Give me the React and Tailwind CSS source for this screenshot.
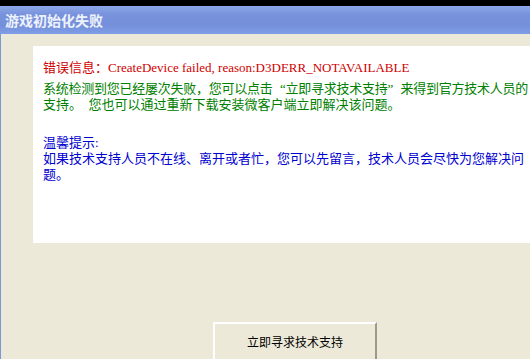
export default function App() {
  const song = { fontFamily: '"Liberation Serif", "Noto Sans CJK SC", serif' };
  return (
    <div className="w-[530px] h-[359px] overflow-hidden bg-black flex flex-col">
      <div className="h-[6px] shrink-0 bg-black" />
      <div
        className="h-[28px] shrink-0 flex items-center pl-[5px] bg-[linear-gradient(to_bottom,#8ea8ea_0%,#7893dc_30%,#7590da_70%,#7f9ee8_100%)]"
      >
        <span
          className="text-[14px] font-bold text-[#eef2fc] leading-none"
          style={{ fontFamily: '"Noto Sans CJK SC", sans-serif' }}
        >
          游戏初始化失败
        </span>
      </div>
      <div className="flex-1 bg-[#ece9d8] border-l border-[#7d97d6] flex flex-col overflow-hidden">
        <div
          className="ml-[32px] mt-[12px] h-[197px] shrink-0 bg-white pl-[10px] pt-[14px] text-[13px] leading-[16px] whitespace-pre overflow-hidden"
          style={song}
        >
          <div className="text-[#d00000]">错误信息：CreateDevice failed, reason:D3DERR_NOTAVAILABLE</div>
          <div className="mt-[5px] text-[#008000]">
            <div className="tracking-[-0.25px]">
              系统检测到您已经屡次失败，您可以点击
              <span className="inline-block w-[13px] text-right">“</span>
              立即寻求技术支持
              <span className="inline-block w-[13px] text-left">”</span>
              来得到官方技术人员的
            </div>
            <div>支持。  您也可以通过重新下载安装微客户端立即解决该问题。</div>
          </div>
          <div className="mt-[22px] text-[#0000d0]">
            <div>温馨提示:</div>
            <div>如果技术支持人员不在线、离开或者忙，您可以先留言，技术人员会尽快为您解决问</div>
            <div>题。</div>
          </div>
        </div>
        <div className="ml-[212px] mt-[79px] shrink-0">
          <button
            className="w-[164px] h-[40px] bg-[#ece9d8] border-t-2 border-l-2 border-t-white border-l-white border-r-2 border-r-[#9d9a8c] flex justify-center pt-[10px] text-[12px] leading-[16px] text-black"
            style={{ fontFamily: '"Noto Sans CJK SC", sans-serif' }}
          >
            立即寻求技术支持
          </button>
        </div>
      </div>
    </div>
  );
}
